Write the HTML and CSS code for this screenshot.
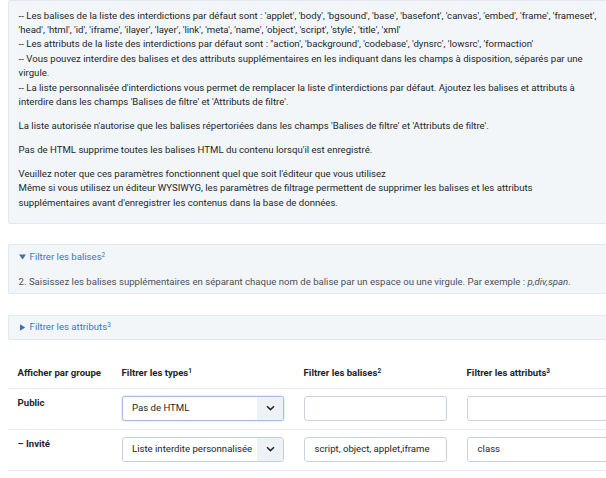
FILE: index.html
```html
<!DOCTYPE html>
<html lang="fr">
<head>
<meta charset="utf-8">
<title>Filtres de texte</title>
<link rel="stylesheet" href="styles.css">
</head>
<body>
<div class="page">
  <div class="panel intro">
    <p>-- Les balises de la liste des interdictions par défaut sont : 'applet', 'body', 'bgsound', 'base', 'basefont', 'canvas', 'embed', 'frame', 'frameset', 'head', 'html', 'id', 'iframe', 'ilayer', 'layer', 'link', 'meta', 'name', 'object', 'script', 'style', 'title', 'xml'<br>-- Les attributs de la liste des interdictions par défaut sont : "action', 'background', 'codebase', 'dynsrc', 'lowsrc', 'formaction'<br>-- Vous pouvez interdire des balises et des attributs supplémentaires en les indiquant dans les champs à disposition, séparés par une virgule.<br>-- La liste personnalisée d'interdictions vous permet de remplacer la liste d'interdictions par défaut. Ajoutez les balises et attributs à interdire dans les champs 'Balises de filtre' et 'Attributs de filtre'.</p>
    <p>La liste autorisée n'autorise que les balises répertoriées dans les champs 'Balises de filtre' et 'Attributs de filtre'.</p>
    <p>Pas de HTML supprime toutes les balises HTML du contenu lorsqu'il est enregistré.</p>
    <p>Veuillez noter que ces paramètres fonctionnent quel que soit l'éditeur que vous utilisez<br>Même si vous utilisez un éditeur WYSIWYG, les paramètres de filtrage permettent de supprimer les balises et les attributs supplémentaires avant d'enregistrer les contenus dans la base de données.</p>
  </div>

  <div class="panel acc open">
    <div class="summary">
      <svg class="tri" width="7" height="6" viewBox="0 0 7 6"><path d="M0 0.5H7L3.5 5.5Z" fill="#3f6fb0"/></svg>
      <span>Filtrer les balises<sup>2</sup></span>
    </div>
    <div class="acc-body">2. Saisissez les balises supplémentaires en séparant chaque nom de balise par un espace ou une virgule. Par exemple : <em>p,div,span</em>.</div>
  </div>

  <div class="panel acc">
    <div class="summary">
      <svg class="tri" width="7" height="7" viewBox="0 0 7 7"><path d="M1 0.3V6.7L6.2 3.5Z" fill="#3f6fb0"/></svg>
      <span>Filtrer les attributs<sup>3</sup></span>
    </div>
  </div>

  <table class="filters">
    <colgroup>
      <col class="c1"><col class="c2"><col class="c3"><col class="c4">
    </colgroup>
    <thead>
      <tr>
        <th>Afficher par groupe</th>
        <th>Filtrer les types<sup>1</sup></th>
        <th>Filtrer les balises<sup>2</sup></th>
        <th>Filtrer les attributs<sup>3</sup></th>
      </tr>
    </thead>
    <tbody>
      <tr>
        <th class="grp">Public</th>
        <td>
          <div class="select focus">
            <span class="val">Pas de HTML</span>
            <span class="arrow"><svg width="9" height="6" viewBox="0 0 9 6"><path d="M1 1.2L4.5 4.6L8 1.2" fill="none" stroke="#22262a" stroke-width="1.5"/></svg></span>
          </div>
        </td>
        <td><div class="input"></div></td>
        <td><div class="input"></div></td>
      </tr>
      <tr>
        <th class="grp">– Invité</th>
        <td>
          <div class="select">
            <span class="val">Liste interdite personnalisée</span>
            <span class="arrow"><svg width="9" height="6" viewBox="0 0 9 6"><path d="M1 1.2L4.5 4.6L8 1.2" fill="none" stroke="#22262a" stroke-width="1.5"/></svg></span>
          </div>
        </td>
        <td><div class="input">script, object, applet,iframe</div></td>
        <td><div class="input">class</div></td>
      </tr>
    </tbody>
  </table>
</div>
</body>
</html>
```

FILE: styles.css
```css
html, body {
  margin: 0;
  padding: 0;
  background: #ffffff;
  overflow: hidden;
}

body {
  font-family: Roboto, "Liberation Sans", sans-serif;
  font-size: 9.6px;
  line-height: 14.4px;
  color: #22262a;
}

.page {
  width: 613px;
  padding: 0 0 0 8px;
}

.panel {
  background: #f3f6f9;
  border: 1px solid #e3e8ee;
  border-radius: 2px;
}

.intro {
  margin-right: 5px;
  padding: 7.5px 9.6px 13px 9.6px;
}

.intro p {
  margin: 0 0 9.6px 0;
}

.intro p:last-child {
  margin-bottom: 0;
}

.acc {
  margin-top: 20px;
}

.acc + .acc {
  margin-top: 21px;
}

.summary {
  display: flex;
  align-items: center;
  gap: 4px;
  padding: 4px 9.6px;
  color: #3f74bd;
}

.open .summary {
  padding-top: 4.8px;
  padding-bottom: 4.8px;
}

.tri {
  display: block;
  flex: none;
}

sup {
  font-size: 6.5px;
  line-height: 0;
  vertical-align: 3.5px;
}

.acc-body {
  padding: 5.8px 9.6px 3.8px 9.6px;
  color: #4a5056;
}

.acc-body em {
  font-style: italic;
}

.filters {
  margin-top: 19px;
  width: 613px;
  border-collapse: collapse;
  table-layout: fixed;
}

.c1 { width: 104px; }
.c2 { width: 182px; }
.c3 { width: 163px; }
.c4 { width: 164px; }

.filters th,
.filters td {
  text-align: left;
  vertical-align: top;
  padding: 7px 9.6px 8px 9.6px;
  border-bottom: 1px solid #e6e9ed;
}

.filters thead th {
  font-weight: 700;
  padding: 7.4px 9.6px 7.2px 9.6px;
  white-space: nowrap;
}

.filters th.grp {
  font-weight: 700;
}

.select {
  display: flex;
  height: 25px;
  box-sizing: border-box;
  border: 1px solid #c2cfdf;
  border-radius: 3px;
  background: #ffffff;
  overflow: hidden;
}

.select.focus {
  border-color: #a6bde0;
  box-shadow: 0 0 0 0.5px rgba(130, 165, 215, 0.35);
}

.select .val {
  flex: 1;
  padding-left: 9.4px;
  display: flex;
  align-items: center;
  white-space: nowrap;
  overflow: hidden;
}

.select .arrow {
  flex: none;
  width: 26px;
  background: #eef2f7;
  display: flex;
  align-items: center;
  justify-content: center;
}

.select .arrow svg {
  display: block;
}

.input {
  height: 25px;
  box-sizing: border-box;
  border: 1px solid #c8d3e1;
  border-radius: 3px;
  background: #ffffff;
  padding: 0 10px;
  display: flex;
  align-items: center;
  white-space: nowrap;
  overflow: hidden;
}
```
